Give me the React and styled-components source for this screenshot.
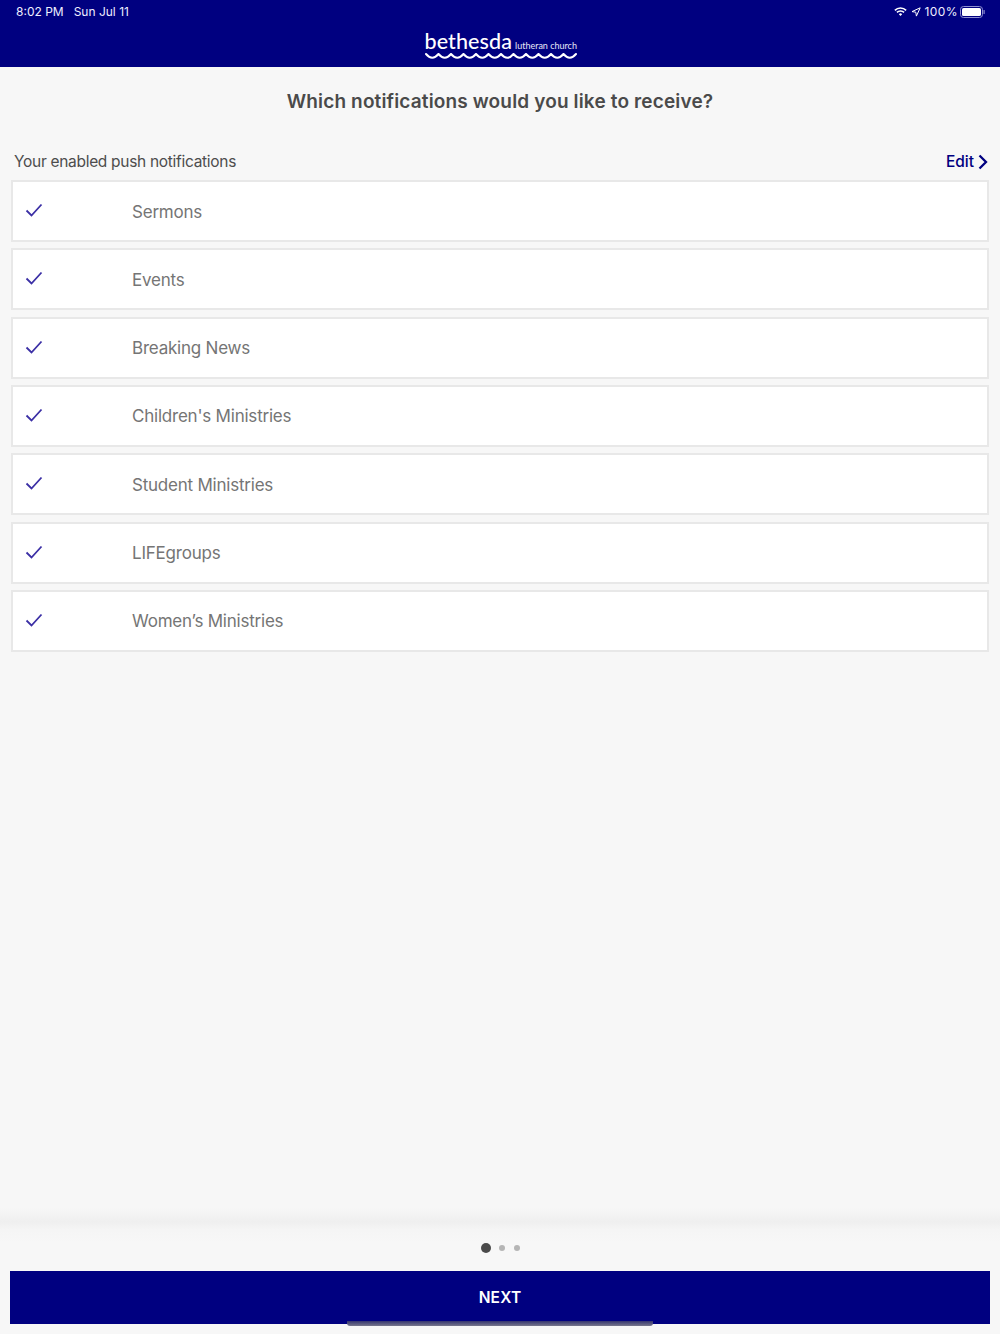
import React from "react";
import styled, { createGlobalStyle } from "styled-components";

const Global = createGlobalStyle`
  html, body { margin: 0; padding: 0; background: #f7f7f7; }
  * { box-sizing: border-box; }
`;
const Page = styled.div`
  width: 1000px; height: 1334px; display: flex; flex-direction: column;
  background: #f7f7f7; font-family: Inter, "Liberation Sans", sans-serif; position: relative; overflow: hidden;
`;
const Header = styled.header`
  height: 67px; background: #000080; color: #fff; display: flex; flex-direction: column; flex: none;
`;
const StatusBar = styled.div`
  height: 23px; padding: 0 15px 0 16px; display: flex; align-items: center; justify-content: space-between;
  font-size: 12px; color: #eef;
`;
const StatusLeft = styled.div`display: flex; gap: 10px;`;
const StatusRight = styled.div`display: flex; align-items: center; gap: 4px; letter-spacing: 0.4px;`;
const Battery = styled.span`margin-right: -2px;`;
const Logo = styled.div`
  width: 152px; align-self: center; margin-top: 7px; margin-left: 1px;
`;
const LogoRow = styled.div`display: flex; align-items: baseline; gap: 3px; height: 22px;`;
const LogoName = styled.span`
  font-family: Lato, sans-serif; font-size: 21.5px; line-height: 22px; font-weight: 500; letter-spacing: 0.1px; color: #fff;
`;
const LogoSub = styled.span`
  font-family: Lato, sans-serif; font-size: 9px; color: #e8e8f8; white-space: nowrap;
`;
const LogoWave = styled.svg`display: block; margin-top: 1px;`;
const Title = styled.h1`
  margin: 0; padding-top: 23px; height: 68px; text-align: center; font-size: 19px; line-height: 24px;
  font-weight: 600; color: #4a4a4a; letter-spacing: 0.15px;
`;
const SectionHead = styled.div`
  height: 45px; padding: 16px 12px 0 14px; display: flex; justify-content: space-between; align-items: flex-start;
`;
const SectionLabel = styled.div`font-size: 15.5px; line-height: 22px; color: #4d4d4d; letter-spacing: -0.3px;`;
const EditLink = styled.div`
  display: flex; align-items: center; gap: 4px; font-size: 15.5px; line-height: 22px; font-weight: 500; color: #000080;
`;
const List = styled.div`
  margin: 0 11px; display: flex; flex-direction: column; gap: 6.33px; flex: 1;
`;
const Row = styled.div`
  height: 62px; flex: none; background: #fff; border: 2px solid #e8e8e8; display: flex; align-items: center; padding-left: 12px;
`;
const RowCheck = styled.svg`width: 18px; height: 14px; flex: none; margin-top: -2px; margin-right: 89px;`;
const RowLabel = styled.span`font-size: 17px; line-height: 22px; padding-top: 1px; color: #757575; letter-spacing: -0.22px;`;
const Footer = styled.div`
  height: 112px; flex: none; display: flex; flex-direction: column; align-items: center; position: relative;
  background: linear-gradient(#efefef 0, #f5f5f5 8px, #f7f7f7 20px);
`;
const FooterFade = styled.div`
  position: absolute; left: 0; right: 0; top: -14px; height: 14px;
  background: linear-gradient(#f7f7f700, #efefef);
`;
const Dots = styled.div`
  height: 49px; display: flex; align-items: center; justify-content: center; gap: 8.5px; padding-top: 3px;
`;
const Dot = styled.span`
  width: ${p => (p.$on ? 10 : 6)}px; height: ${p => (p.$on ? 10 : 6)}px; border-radius: 50%;
  background: ${p => (p.$on ? "#4a4a4a" : "#b5b5b5")};
`;
const NextButton = styled.div`
  width: 980px; height: 53px; background: #000080; color: #fff; display: flex; align-items: center; justify-content: center;
  font-size: 15.5px; font-weight: 600; letter-spacing: 0.2px;
`;
const HomeBar = styled.div`
  position: absolute; left: 347px; top: 1321px; width: 306px; height: 5px; border-radius: 0 0 3px 3px;
  background: linear-gradient(#33336f, #77778c);
`;

const items = ["Sermons", "Events", "Breaking News", "Children's Ministries", "Student Ministries", "LIFEgroups", "Women’s Ministries"];

const wave = Array.from({ length: 12 }, () => `q6.25 7.5 12.5 0`).join(" ");

export default function App() {
  return (
    <Page>
      <Global />
      <Header>
        <StatusBar>
          <StatusLeft><span>8:02 PM</span><span>Sun Jul 11</span></StatusLeft>
          <StatusRight>
            <svg width="13" height="11" viewBox="0 0 15 11" fill="none" stroke="#fff" strokeWidth="1.9">
              <path d="M1 4.2a9.2 9.2 0 0 1 13 0" />
              <path d="M3.4 6.6a5.8 5.8 0 0 1 8.2 0" />
              <path d="M7.5 10.6 5.6 8.6a2.7 2.7 0 0 1 3.8 0z" fill="#fff" stroke="none" />
            </svg>
            <svg width="10" height="10" viewBox="0 0 10 10" fill="none" stroke="#fff" strokeWidth="1">
              <path d="M9.2.8 1 4.6l3.8.6.6 3.9z" strokeLinejoin="round" />
            </svg>
            <Battery>100%</Battery>
            <svg width="25" height="12" viewBox="0 0 25 12">
              <rect x=".5" y=".5" width="22" height="11" rx="3" fill="none" stroke="#8f8fd0" />
              <rect x="2" y="2" width="19" height="8" rx="1.6" fill="#fff" />
              <rect x="23.5" y="4" width="1.2" height="4" rx=".6" fill="#8f8fd0" />
            </svg>
          </StatusRight>
        </StatusBar>
        <Logo>
          <LogoRow><LogoName>bethesda</LogoName><LogoSub>lutheran church</LogoSub></LogoRow>
          <LogoWave width="152" height="7" viewBox="0 0 152 7" fill="none" stroke="#fff" strokeWidth="2" strokeLinecap="round">
            <path d={`M1 1 ${wave}`} />
          </LogoWave>
        </Logo>
      </Header>
      <Title>Which notifications would you like to receive?</Title>
      <SectionHead>
        <SectionLabel>Your enabled push notifications</SectionLabel>
        <EditLink>
          Edit
          <svg width="10" height="16" viewBox="0 0 10 16" fill="none" stroke="#000080" strokeWidth="2.3">
            <path d="M1.5 1.5 8 8 1.5 14.5" />
          </svg>
        </EditLink>
      </SectionHead>
      <List>
        {items.map(t => (
          <Row key={t}>
            <RowCheck viewBox="0 0 18 14" fill="none" stroke="#3b2fa5" strokeWidth="1.8">
              <path d="M1.5 7.5 6.5 12.5 16.5 1.5" />
            </RowCheck>
            <RowLabel>{t}</RowLabel>
          </Row>
        ))}
      </List>
      <Footer>
        <FooterFade />
        <Dots><Dot $on /><Dot /><Dot /></Dots>
        <NextButton>NEXT</NextButton>
      </Footer>
      <HomeBar />
    </Page>
  );
}
